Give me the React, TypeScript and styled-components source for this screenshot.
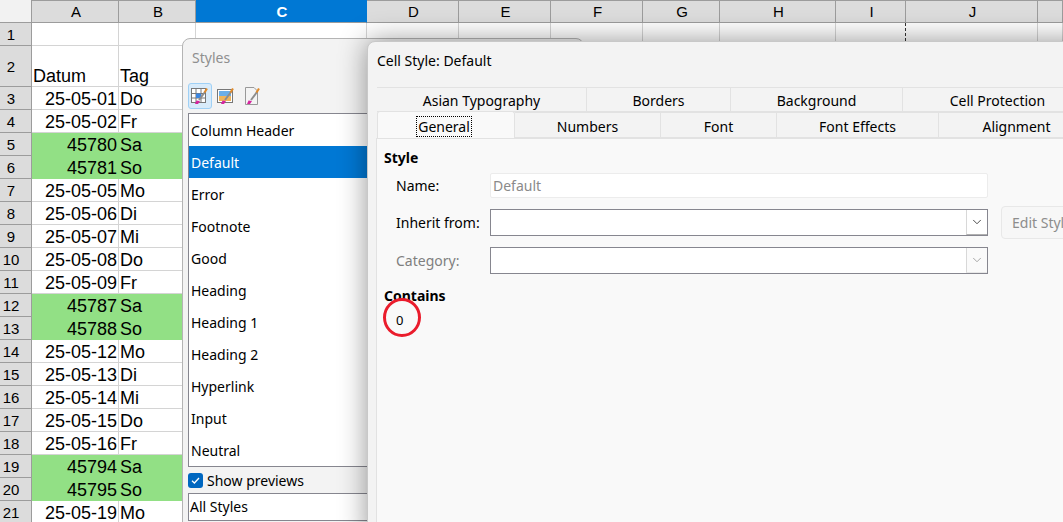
import React from 'react';
import styled, {createGlobalStyle} from 'styled-components';
import {ChevronDown} from 'lucide-react';

const GlobalStyle = createGlobalStyle`
  html, body {
    margin: 0;
    padding: 0;
    width: 1063px;
    height: 522px;
    overflow: hidden;
    background: #fff;
  }
`;

const Screen = styled.div`
  position: relative;
  width: 1063px;
  height: 522px;
  overflow: hidden;
`;

/* spreadsheet */
const COLUMNS = [
  {name: 'A', width: 87},
  {name: 'B', width: 77},
  {name: 'C', width: 171},
  {name: 'D', width: 92},
  {name: 'E', width: 92},
  {name: 'F', width: 92},
  {name: 'G', width: 77},
  {name: 'H', width: 116},
  {name: 'I', width: 70},
  {name: 'J', width: 132},
  {name: '', width: 25},
];

const ROWS: { date?: string; day?: string; green?: boolean; title?: boolean }[] = [
  {},
  {date: 'Datum', day: 'Tag', title: true},
  {date: '25-05-01', day: 'Do'},
  {date: '25-05-02', day: 'Fr'},
  {date: '45780', day: 'Sa', green: true},
  {date: '45781', day: 'So', green: true},
  {date: '25-05-05', day: 'Mo'},
  {date: '25-05-06', day: 'Di'},
  {date: '25-05-07', day: 'Mi'},
  {date: '25-05-08', day: 'Do'},
  {date: '25-05-09', day: 'Fr'},
  {date: '45787', day: 'Sa', green: true},
  {date: '45788', day: 'So', green: true},
  {date: '25-05-12', day: 'Mo'},
  {date: '25-05-13', day: 'Di'},
  {date: '25-05-14', day: 'Mi'},
  {date: '25-05-15', day: 'Do'},
  {date: '25-05-16', day: 'Fr'},
  {date: '45794', day: 'Sa', green: true},
  {date: '45795', day: 'So', green: true},
  {date: '25-05-19', day: 'Mo'},
];

const Sheet = styled.div`
  display: grid;
  width: max-content;
  grid-template-columns: 32px ${COLUMNS.map((c) => c.width + 'px').join(' ')};
  grid-template-rows: 23px 23px 41px repeat(19, 23px);
  font-family: "Liberation Sans", Arial, sans-serif;
  color: #000;
`;

const Corner = styled.div`
  background: #f2f2f2;
  box-sizing: border-box;
  border-right: 1px solid #9c9c9c;
  border-bottom: 1px solid #9c9c9c;
`;

const ColumnHead = styled.div<{ $active?: boolean }>`
  box-sizing: border-box;
  display: flex;
  align-items: center;
  justify-content: center;
  padding-left: 2px;
  font-size: 15px;
  font-weight: ${(p) => (p.$active ? 700 : 400)};
  color: ${(p) => (p.$active ? '#fff' : '#000')};
  background: ${(p) => (p.$active ? '#0078d4' : '#dcdcdc')};
  border-top: 1px solid ${(p) => (p.$active ? '#0078d4' : '#9c9c9c')};
  border-right: 1px solid ${(p) => (p.$active ? '#0078d4' : '#9c9c9c')};
  border-bottom: 1px solid #9c9c9c;
`;

const RowHead = styled.div`
  box-sizing: border-box;
  display: flex;
  align-items: center;
  justify-content: center;
  padding-right: 9px;
  font-size: 15px;
  background: #dcdcdc;
  border-right: 1px solid #9c9c9c;
  border-bottom: 1px solid #9c9c9c;
`;

const Cell = styled.div<{ $green?: boolean; $right?: boolean; $pageBreak?: boolean }>`
  box-sizing: border-box;
  display: flex;
  align-items: flex-end;
  justify-content: ${(p) => (p.$right ? 'flex-end' : 'flex-start')};
  padding: 0 1px;
  font-size: 18px;
  line-height: 20px;
  white-space: nowrap;
  background: ${(p) => (p.$green ? '#92e085' : '#fff')};
  border-right: 1px ${(p) => (p.$pageBreak ? 'dashed #333' : 'solid #d4d4d4')};
  border-bottom: 1px solid #d4d4d4;
  ${(p) => p.$green && 'border-color: #92e085;'}
`;

/* dialogs */
const Dialog = styled.div`
  position: absolute;
  box-sizing: border-box;
  background: #f3f3f3;
  border: 1px solid #b4b4b4;
  border-radius: 8px 8px 0 0;
  font-family: "Noto Sans", "Open Sans", sans-serif;
  font-size: 14px;
  color: #000;
`;

const StylesWindow = styled(Dialog)`
  left: 182px;
  top: 38px;
  width: 402px;
  height: 500px;
  display: flex;
  flex-direction: column;
  padding: 0 0 0 5px;
`;

const StylesTitle = styled.div`
  height: 39px;
  display: flex;
  align-items: center;
  padding-left: 4px;
  padding-bottom: 2px;
  box-sizing: border-box;
  color: #8f8f8f;
  font-size: 14px;
`;

const Toolbar = styled.div`
  display: flex;
  align-items: center;
  height: 26px;
  margin-top: 5px;
  gap: 2px;
`;

const ToolButton = styled.div<{ $on?: boolean }>`
  width: 24px;
  height: 26px;
  box-sizing: border-box;
  display: flex;
  align-items: center;
  justify-content: center;
  border-radius: 3px;
  background: ${(p) => (p.$on ? '#d8ebfa' : 'transparent')};
  border: 1px solid ${(p) => (p.$on ? '#9fd0f5' : 'transparent')};
`;

const StyleList = styled.div`
  margin-top: 4px;
  height: 354px;
  width: 300px;
  box-sizing: border-box;
  background: #fff;
  border: 1px solid #86868f;
`;

const StyleItem = styled.div<{ $selected?: boolean }>`
  height: 32px;
  display: flex;
  align-items: center;
  padding-left: 2px;
  color: ${(p) => (p.$selected ? '#fff' : '#000')};
  background: ${(p) => (p.$selected ? '#0078d4' : 'transparent')};
`;

const PreviewRow = styled.div`
  display: flex;
  align-items: center;
  gap: 4px;
  height: 26px;
`;

const CheckBox = styled.div`
  width: 15px;
  height: 15px;
  border-radius: 3px;
  background: #0067c0;
  display: flex;
  align-items: center;
  justify-content: center;
`;

const FilterBox = styled.div`
  width: 300px;
  height: 28px;
  box-sizing: border-box;
  border: 1px solid #86868f;
  background: #fff;
  display: flex;
  align-items: center;
  padding: 0 0 2px 1px;
`;

const CellWindow = styled(Dialog)`
  left: 367px;
  top: 41px;
  width: 760px;
  height: 500px;
  display: flex;
  flex-direction: column;
  border-color: #c8c8c8;
  box-shadow: 0 0 28px rgba(0, 0, 0, 0.42);
`;

const WindowTitle = styled.div`
  height: 37px;
  display: flex;
  align-items: center;
  padding-left: 9px;
`;

const TabStack = styled.div`
  margin-top: 8px;
  margin-left: 9px;
`;

const TabRow = styled.div<{ $h: number }>`
  display: flex;
  height: ${(p) => p.$h}px;
`;

const Tab = styled.div<{ $w: number; $active?: boolean }>`
  width: ${(p) => p.$w}px;
  box-sizing: border-box;
  display: flex;
  align-items: center;
  justify-content: center;
  padding-top: 2px;
  background: ${(p) => (p.$active ? '#f9f9f9' : '#f3f3f3')};
  border: 1px solid #e2e2e2;
  border-left-width: ${(p) => (p.$active ? 1 : 0)}px;
  ${(p) => p.$active && 'border-bottom: 0; height: 27px; margin-top: -1px; border-radius: 3px 3px 0 0;'}
`;

const FocusLabel = styled.span`
  outline: 1px dotted #000;
  padding: 0 1px;
  margin-right: 4px;
`;

const TabPage = styled.div`
  margin-left: 8px;
  flex: 1;
  background: #f9f9f9;
  border-top: 1px solid #e2e2e2;
  border-left: 1px solid #e2e2e2;
  padding: 9px 0 0 7px;
`;

const SectionHead = styled.div`
  font-weight: 700;
  height: 19px;
  line-height: 19px;
`;

const FormRow = styled.div<{ $top: number }>`
  display: flex;
  align-items: center;
  margin-top: ${(p) => p.$top}px;
  padding-left: 12px;
`;

const FormLabel = styled.div<{ $muted?: boolean }>`
  width: 94px;
  color: ${(p) => (p.$muted ? '#7f7f7f' : '#000')};
`;

const NameField = styled.div`
  width: 498px;
  height: 25px;
  box-sizing: border-box;
  background: #fff;
  border: 1px solid #ececec;
  border-radius: 2px;
  color: #8a8a8a;
  display: flex;
  align-items: center;
  padding-left: 2px;
`;

const Combo = styled.div`
  width: 498px;
  height: 27px;
  box-sizing: border-box;
  background: #fff;
  border: 1px solid #86868f;
  display: flex;
  justify-content: flex-end;
`;

const ComboArrow = styled.div<{ $muted?: boolean }>`
  width: 21px;
  box-sizing: border-box;
  display: flex;
  align-items: center;
  justify-content: center;
  background: ${(p) => (p.$muted ? '#fafafa' : '#fff')};
  border-left: 1px solid #d8d8d8;
  border-bottom: 1px solid ${(p) => (p.$muted ? '#e8e8e8' : '#b0b0b0')};
  color: ${(p) => (p.$muted ? '#9a9a9a' : '#333')};
`;

const EditButton = styled.div`
  margin-left: 13px;
  width: 110px;
  height: 33px;
  box-sizing: border-box;
  background: #f7f7f7;
  border: 1px solid #e8e8e8;
  border-radius: 4px;
  color: #8d8d8d;
  display: flex;
  align-items: center;
  padding-left: 10px;
  white-space: nowrap;
`;

const ContainsHead = styled(SectionHead)`
  margin-top: 12px;
`;

const ContainsValue = styled.div`
  margin: 6px 0 0 12px;
  font-size: 13px;
  line-height: 18px;
`;

const RedCircle = styled.div`
  position: absolute;
  left: 383px;
  top: 298px;
  width: 38px;
  height: 39px;
  box-sizing: border-box;
  border: 3px solid #ea1c2c;
  border-radius: 50%;
`;

const Brush = () => (
  <>
    <path d="M9 14 L15 6" stroke="#8d8d8d" strokeWidth="2" />
    <path d="M14.5 6.5 L17 2.5" stroke="#e08a2a" strokeWidth="2" />
    <path d="M6.5 14.5 L10 15 L8 18 L5 18 Z" fill="#d6249f" />
  </>
);

const CellStylesIcon = () => (
  <svg width="20" height="20" viewBox="0 0 20 20">
    <rect x="1.5" y="2.5" width="14" height="14" fill="#fff" stroke="#777" />
    <path d="M1.5 7.5 H15.5 M1.5 12 H15.5 M6 2.5 V16.5 M11 2.5 V16.5" stroke="#777" />
    <rect x="6" y="7.5" width="5" height="4.5" fill="#3a86e0" />
    <Brush />
  </svg>
);

const FrameStylesIcon = () => (
  <svg width="20" height="20" viewBox="0 0 20 20">
    <rect x="1.5" y="3.5" width="15" height="13" fill="#fff" stroke="#777" />
    <rect x="3" y="5" width="12" height="5" fill="#6aaee8" />
    <rect x="3" y="10" width="12" height="5" fill="#f0b45a" />
    <Brush />
  </svg>
);

const PageStylesIcon = () => (
  <svg width="20" height="20" viewBox="0 0 20 20">
    <path d="M3.5 1.5 H12 L15.5 5 V18.5 H3.5 Z" fill="#f4f4f4" stroke="#999" />
    <Brush />
  </svg>
);

const STYLE_NAMES = [
  'Column Header', 'Default', 'Error', 'Footnote', 'Good', 'Heading',
  'Heading 1', 'Heading 2', 'Hyperlink', 'Input', 'Neutral',
];

const TOP_TABS = [
  {label: 'Asian Typography', w: 210},
  {label: 'Borders', w: 144},
  {label: 'Background', w: 172},
  {label: 'Cell Protection', w: 190},
];

const BOTTOM_TABS = [
  {label: 'Numbers', w: 146},
  {label: 'Font', w: 116},
  {label: 'Font Effects', w: 162},
  {label: 'Alignment', w: 156},
];

const App = () => (
  <Screen>
    <GlobalStyle />
    <Sheet>
      <Corner />
      {COLUMNS.map((c) => (
        <ColumnHead key={c.name} $active={c.name === 'C'}>{c.name}</ColumnHead>
      ))}
      {ROWS.map((row, i) => (
        <React.Fragment key={i}>
          <RowHead>{i + 1}</RowHead>
          {COLUMNS.map((c) => (
            <Cell
              key={c.name}
              $green={row.green && (c.name === 'A' || c.name === 'B')}
              $right={c.name === 'A' && !row.title}
              $pageBreak={c.name === 'I' && i === 0}
            >
              {c.name === 'A' && row.date}
              {c.name === 'B' && row.day}
            </Cell>
          ))}
        </React.Fragment>
      ))}
    </Sheet>

    <StylesWindow>
      <StylesTitle>Styles</StylesTitle>
      <Toolbar>
        <ToolButton $on><CellStylesIcon /></ToolButton>
        <ToolButton><FrameStylesIcon /></ToolButton>
        <ToolButton><PageStylesIcon /></ToolButton>
      </Toolbar>
      <StyleList>
        {STYLE_NAMES.map((name) => (
          <StyleItem key={name} $selected={name === 'Default'}>{name}</StyleItem>
        ))}
      </StyleList>
      <PreviewRow>
        <CheckBox>
          <svg width="11" height="11" viewBox="0 0 11 11">
            <path d="M2 5.8 L4.4 8 L9 3" stroke="#fff" strokeWidth="1.3" fill="none" />
          </svg>
        </CheckBox>
        Show previews
      </PreviewRow>
      <FilterBox>All Styles</FilterBox>
    </StylesWindow>

    <CellWindow>
      <WindowTitle>Cell Style: Default</WindowTitle>
      <TabStack>
        <TabRow $h={25}>
          {TOP_TABS.map((t) => <Tab key={t.label} $w={t.w}>{t.label}</Tab>)}
        </TabRow>
        <TabRow $h={26}>
          <Tab $w={138} $active><FocusLabel>General</FocusLabel></Tab>
          {BOTTOM_TABS.map((t) => <Tab key={t.label} $w={t.w}>{t.label}</Tab>)}
        </TabRow>
      </TabStack>
      <TabPage>
        <SectionHead>Style</SectionHead>
        <FormRow $top={6}>
          <FormLabel>Name:</FormLabel>
          <NameField>Default</NameField>
        </FormRow>
        <FormRow $top={8}>
          <FormLabel>Inherit from:</FormLabel>
          <Combo><ComboArrow><ChevronDown size={14} strokeWidth={1.5} /></ComboArrow></Combo>
          <EditButton>Edit Style...</EditButton>
        </FormRow>
        <FormRow $top={8}>
          <FormLabel $muted>Category:</FormLabel>
          <Combo><ComboArrow $muted><ChevronDown size={14} strokeWidth={1.5} /></ComboArrow></Combo>
        </FormRow>
        <ContainsHead>Contains</ContainsHead>
        <ContainsValue>0</ContainsValue>
      </TabPage>
    </CellWindow>
    <RedCircle />
  </Screen>
);

export default App;
